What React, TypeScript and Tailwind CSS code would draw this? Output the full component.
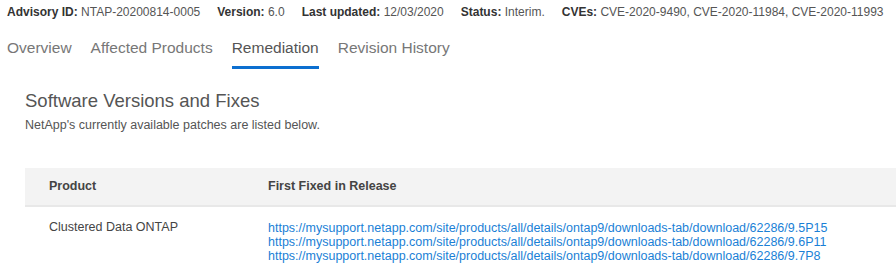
const meta = [
  { label: "Advisory ID:", value: "NTAP-20200814-0005" },
  { label: "Version:", value: "6.0" },
  { label: "Last updated:", value: "12/03/2020" },
  { label: "Status:", value: "Interim." },
  { label: "CVEs:", value: "CVE-2020-9490, CVE-2020-11984, CVE-2020-11993" },
];

const tabs = ["Overview", "Affected Products", "Remediation", "Revision History"];

const links = [
  "https://mysupport.netapp.com/site/products/all/details/ontap9/downloads-tab/download/62286/9.5P15",
  "https://mysupport.netapp.com/site/products/all/details/ontap9/downloads-tab/download/62286/9.6P11",
  "https://mysupport.netapp.com/site/products/all/details/ontap9/downloads-tab/download/62286/9.7P8",
];

export default function App() {
  return (
    <div className="w-[896px] h-[269px] overflow-hidden bg-white font-['Liberation_Sans',Arial,sans-serif] text-[#444]">
      {/* advisory meta */}
      <div className="flex gap-[17px] pl-[7px] pt-[4px] text-[12px] leading-[16px] whitespace-nowrap">
        {meta.map((m) => (
          <div key={m.label}>
            <span className="font-semibold text-[#333]">{m.label}</span>{" "}
            <span className="text-[#555]">{m.value}</span>
          </div>
        ))}
      </div>

      {/* tabs */}
      <div className="flex gap-[19px] pl-[7px] mt-[18px] text-[15.5px] leading-[20px]">
        {tabs.map((t) => (
          <div
            key={t}
            className={
              t === "Remediation"
                ? "pb-[8px] border-b-[3px] border-[#0c6fd0] text-[#555]"
                : "pb-[8px] border-b-[3px] border-transparent text-[#777]"
            }
          >
            {t}
          </div>
        ))}
      </div>

      <div className="pl-[25px] pt-[20px]">
        <h2 className="text-[18.5px] leading-[24px] font-light text-[#555]">Software Versions and Fixes</h2>
        <p className="mt-[4px] text-[12.5px] leading-[16px] text-[#555]">
          NetApp's currently available patches are listed below.
        </p>

        <div className="mt-[35px] w-[871px]">
          <div className="flex h-[39px] items-center bg-[#f3f3f3] border-b-2 border-[#e8e8e8] text-[12.5px] font-bold text-[#444]">
            <div className="w-[243px] pl-[24px]">Product</div>
            <div>First Fixed in Release</div>
          </div>
          <div className="flex pt-[13px] text-[12.5px] leading-[14px]">
            <div className="w-[243px] pl-[24px] text-[#444]">Clustered Data ONTAP</div>
            <div className="flex flex-col pt-[1px]">
              {links.map((l) => (
                <a key={l} href="#" className="text-[#1a7fd6]">
                  {l}
                </a>
              ))}
            </div>
          </div>
        </div>
      </div>
    </div>
  );
}
